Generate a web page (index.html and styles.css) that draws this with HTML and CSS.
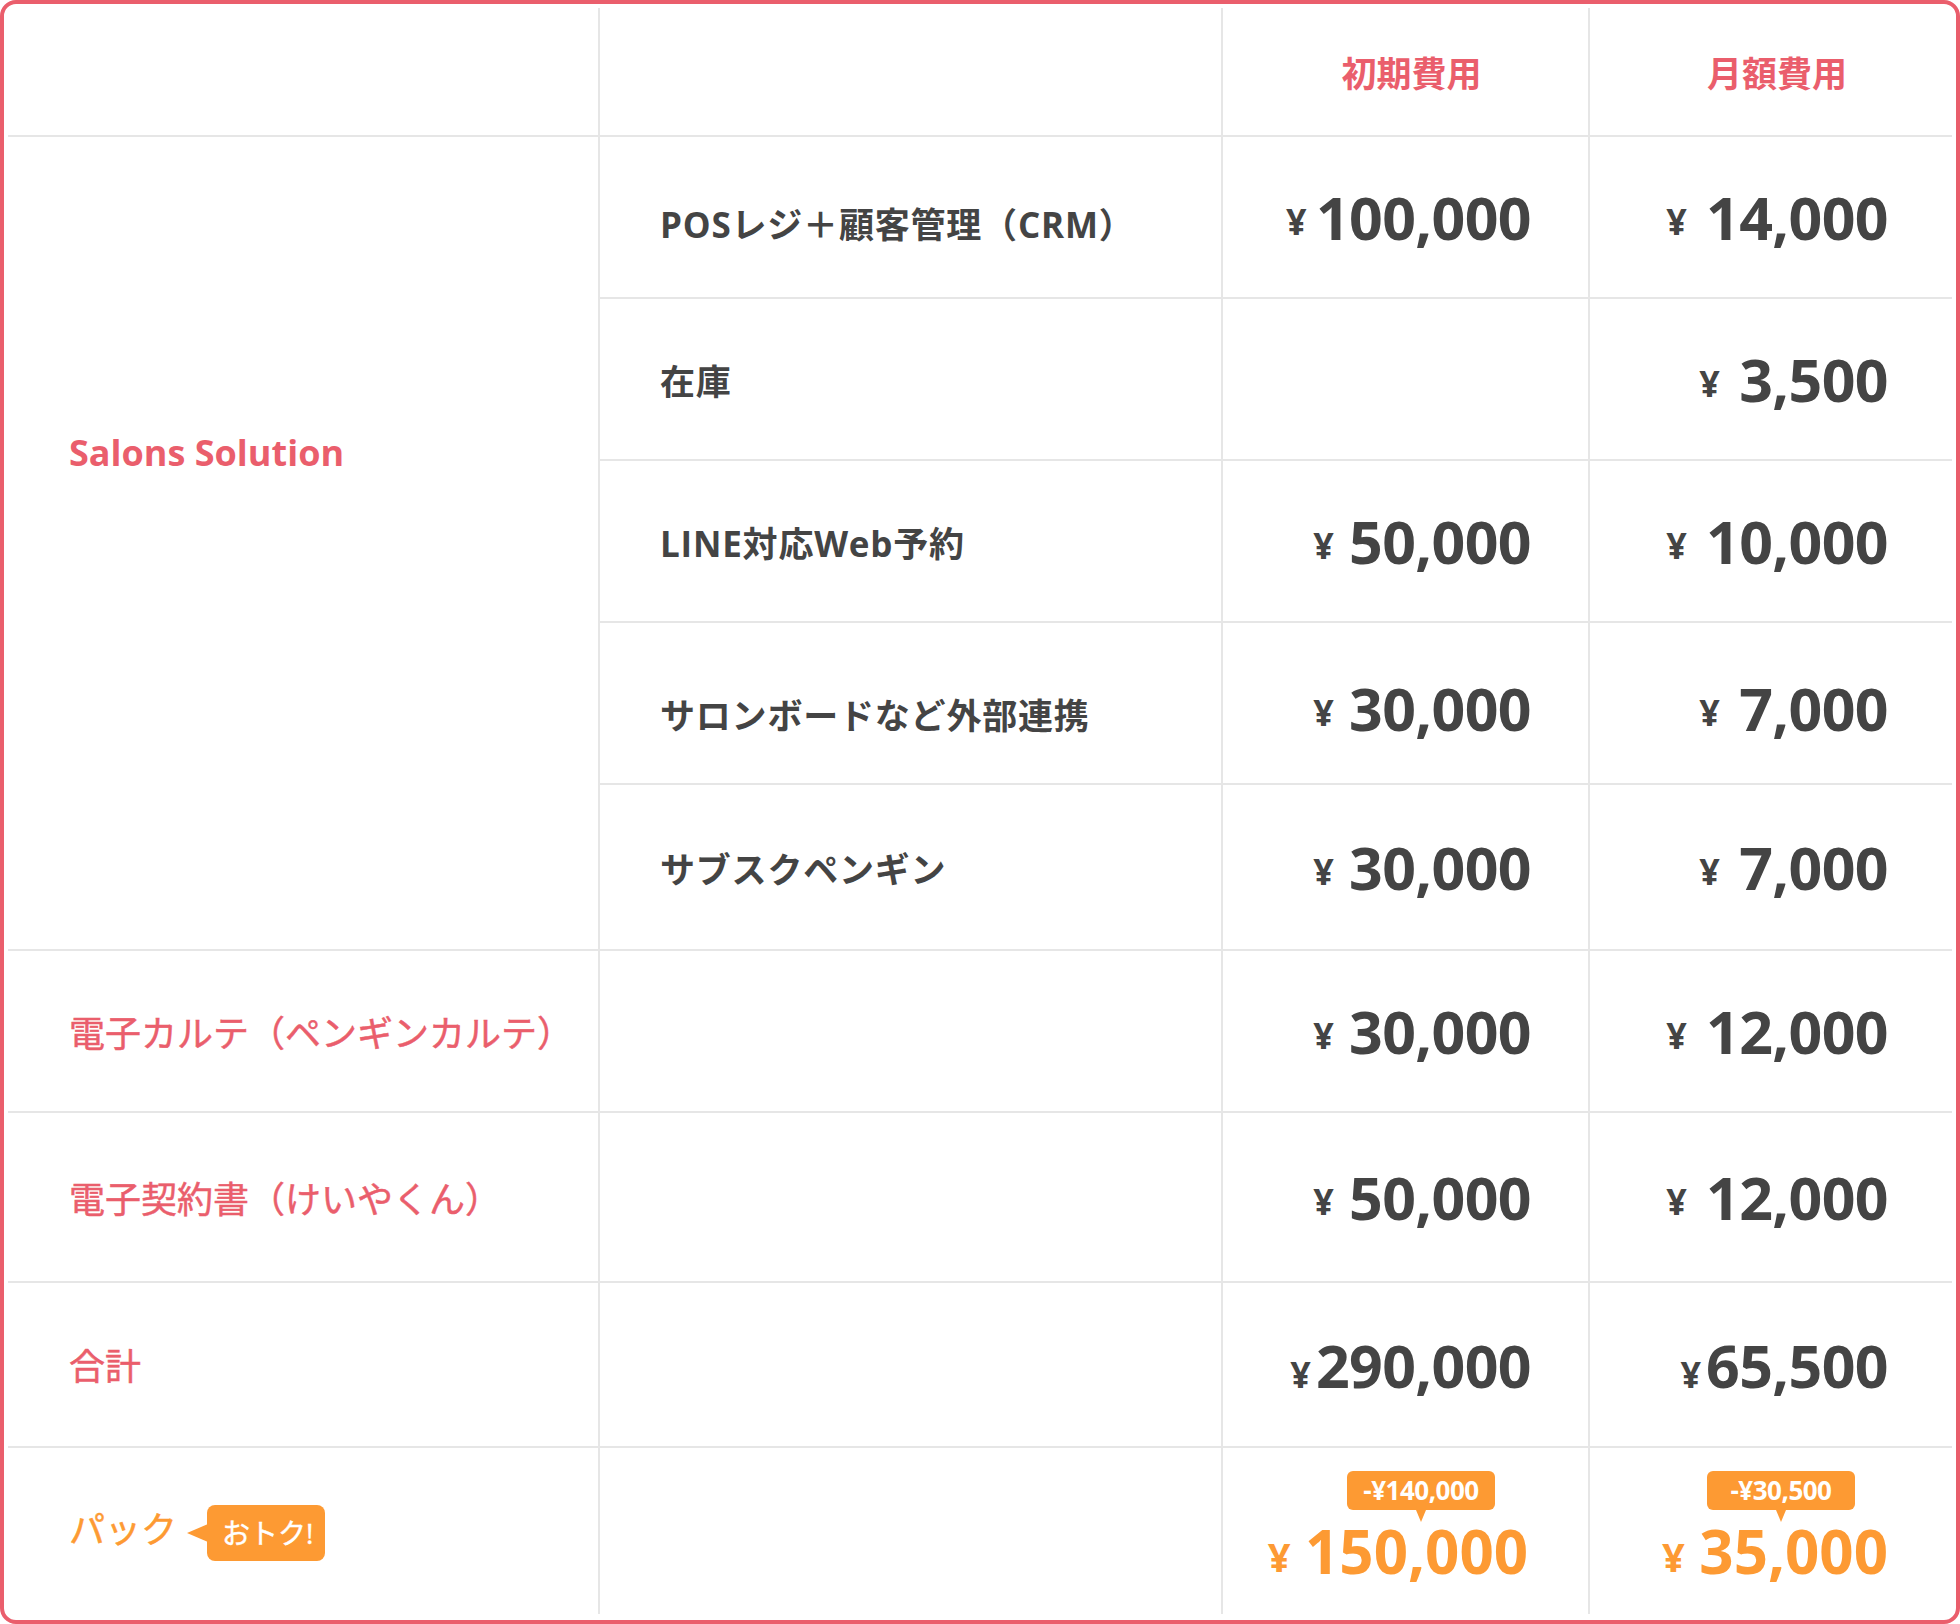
FILE: index.html
```html
<!DOCTYPE html>
<html lang="ja">
<head>
  <meta charset="UTF-8" />
  <meta name="viewport" content="width=device-width, initial-scale=1.0"/>
  <title>料金表</title>
  <link rel="stylesheet" href="styles.css">
</head>
<body>

  <div class="board">
    <table class="price-table">
      <colgroup>
        <col class="c-name">
        <col class="c-item">
        <col class="c-init">
        <col class="c-month">
      </colgroup>
      <thead>
        <tr class="head">
          <th class="first"></th>
          <th></th>
          <th>初期費用</th>
          <th>月額費用</th>
        </tr>
      </thead>
      <tbody>
        <tr>
          <td class="name salons" rowspan="5">Salons Solution</td>
          <td class="item low">POSレジ＋顧客管理（CRM）</td>
          <td class="price init"><span class="yen tight">¥ </span>100,000</td>
          <td class="price"><span class="yen">¥ </span>14,000</td>
        </tr>
        <tr>
          <td class="item">在庫</td>
          <td class="price init"></td>
          <td class="price"><span class="yen">¥ </span>3,500</td>
        </tr>
        <tr>
          <td class="item">LINE対応Web予約</td>
          <td class="price init"><span class="yen">¥ </span>50,000</td>
          <td class="price"><span class="yen">¥ </span>10,000</td>
        </tr>
        <tr class="row-shift">
          <td class="item low">サロンボードなど外部連携</td>
          <td class="price init"><span class="yen">¥ </span>30,000</td>
          <td class="price"><span class="yen">¥ </span>7,000</td>
        </tr>
        <tr class="row-tall">
          <td class="item">サブスクペンギン</td>
          <td class="price init"><span class="yen">¥ </span>30,000</td>
          <td class="price"><span class="yen">¥ </span>7,000</td>
        </tr>
        <tr>
          <td class="name">電子カルテ（ペンギンカルテ）</td>
          <td class="item"></td>
          <td class="price init"><span class="yen">¥ </span>30,000</td>
          <td class="price"><span class="yen">¥ </span>12,000</td>
        </tr>
        <tr class="row-taller">
          <td class="name">電子契約書（けいやくん）</td>
          <td class="item"></td>
          <td class="price init"><span class="yen">¥ </span>50,000</td>
          <td class="price"><span class="yen">¥ </span>12,000</td>
        </tr>
        <tr class="row-total">
          <td class="name">合計</td>
          <td class="item"></td>
          <td class="price init"><span class="yen total-yen">¥</span>290,000</td>
          <td class="price"><span class="yen total-yen">¥</span>65,500</td>
        </tr>
        <tr class="row-pack">
          <td class="name pack">パック<span class="deal">おトク!</span></td>
          <td class="item"></td>
          <td class="price init pack-price">
            <div class="save"><span class="save-tag">-¥140,000</span></div>
            <span class="yen">¥ </span>150,000
          </td>
          <td class="price pack-price">
            <div class="save"><span class="save-tag">-¥30,500</span></div>
            <span class="yen">¥ </span>35,000
          </td>
        </tr>
      </tbody>
    </table>
  </div>

</body>
</html>
```

FILE: styles.css
```css
* {
  box-sizing: border-box;
}
body {
  margin: 0;
  font-family: "Open Sans", "Noto Sans CJK JP", sans-serif;
  color: #444;
  background: #fff;
}
.board {
  min-height: 100vh;
  border: 4px solid #ea5e6c;
  border-radius: 16px;
  padding: 4px;
}
.price-table {
  width: 100%;
  border-collapse: collapse;
  table-layout: fixed;
}
.c-name {
  width: 591px;
}
.c-item {
  width: 623px;
}
.c-init {
  width: 367px;
}
.c-month {
  width: 363px;
}
th,
td {
  border-left: 2px solid #e6e6e6;
  padding: 0;
  vertical-align: middle;
}
tbody td {
  border-top: 2px solid #e6e6e6;
}
.price-table .first,
.price-table .name {
  border-left: none;
}
.head {
  height: 128px;
}
.head th {
  font-family: "Noto Sans CJK JP", sans-serif;
  font-size: 35px;
  font-weight: 700;
  color: #ea5e6c;
  text-align: center;
  padding-left: 12px;
}
tbody tr {
  height: 162px;
}
tbody .row-tall {
  height: 166px;
}
tbody .row-taller {
  height: 170px;
}
tbody .row-total {
  height: 165px;
}
tbody .row-pack {
  height: 167px;
}
.row-shift td {
  padding-top: 10px;
}
.name {
  padding-left: 61px;
  font-size: 36px;
  font-weight: 400;
  color: #ea5e6c;
  white-space: nowrap;
  -webkit-text-stroke: 0.5px #ea5e6c;
}
.name.salons {
  font-weight: 700;
  -webkit-text-stroke: 0;
  padding-bottom: 182px;
}
.item {
  padding-left: 60px;
  font-size: 35px;
  font-weight: 700;
  letter-spacing: 0.8px;
  white-space: nowrap;
}
.item.low {
  padding-top: 10px;
}
.row-shift .item.low {
  padding-top: 20px;
}
.price {
  text-align: right;
  padding-right: 64px;
  font-size: 59px;
  font-weight: 700;
  letter-spacing: -0.6px;
  white-space: nowrap;
}
.price.init {
  padding-right: 57px;
}
.yen {
  font-size: 36px;
  letter-spacing: 0;
  vertical-align: 5px;
  white-space: pre;
  margin-right: 10px;
}
.init .yen {
  margin-right: 6px;
}
.init .yen.tight {
  margin-right: 0;
}
.yen.total-yen {
  vertical-align: 0;
  margin-right: 5px;
}

/* pack row */
.name.pack {
  color: #fd9a33;
  -webkit-text-stroke: 0.5px #fd9a33;
}
.deal {
  position: relative;
  display: inline-block;
  vertical-align: middle;
  margin-left: 30px;
  height: 56px;
  padding: 0 12px 0 15px;
  line-height: 56px;
  font-size: 28px;
  color: #fff;
  background: #fd9a33;
  border-radius: 8px;
  -webkit-text-stroke: 0.4px #fff;
}
.deal::before {
  content: "";
  position: absolute;
  left: -20px;
  top: 19px;
  border-style: solid;
  border-width: 9px 21px 9px 0;
  border-color: transparent #fd9a33 transparent transparent;
}
.pack-price {
  color: #fd9a33;
  font-size: 60px;
  letter-spacing: 0;
}
.price.init.pack-price {
  padding-right: 60px;
}
.pack-price .yen,
.init.pack-price .yen {
  font-size: 40px;
  vertical-align: 2px;
  margin-right: 4px;
}
.save {
  display: flex;
  justify-content: flex-end;
  padding-right: 33px;
}
.save-tag {
  position: relative;
  width: 148px;
  height: 39px;
  line-height: 39px;
  text-align: center;
  font-size: 26px;
  font-weight: 700;
  letter-spacing: -0.5px;
  color: #fff;
  background: #fd9a33;
  border-radius: 6px;
}
.save-tag::after {
  content: "";
  position: absolute;
  left: 50%;
  bottom: -12px;
  margin-left: -5px;
  border-style: solid;
  border-width: 12px 5px 0 5px;
  border-color: #fd9a33 transparent transparent transparent;
}
```
